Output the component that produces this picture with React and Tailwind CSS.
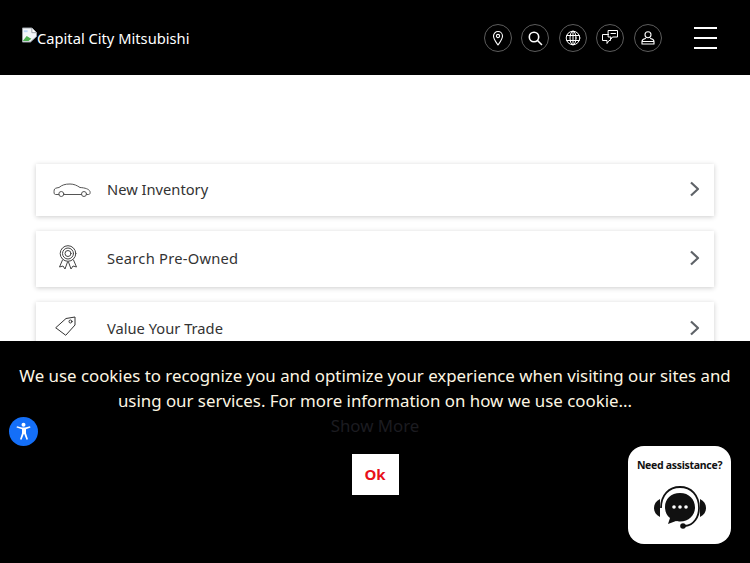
import React from "react";

const stroke = { fill: "none", stroke: "currentColor", strokeLinecap: "round", strokeLinejoin: "round" };

function HeadBtn({ children }) {
  return (
    <div className="w-[28px] h-[28px] rounded-full border border-[#5c5c5c] flex items-center justify-center text-white">
      {children}
    </div>
  );
}

function Row({ icon, label, cls, textCls, chevCls }) {
  return (
    <div className={`flex items-center bg-white shadow-[0_1px_5px_rgba(0,0,0,0.2)] pr-[14px] ${cls}`}>
      <div className="w-[71px] flex justify-center shrink-0">{icon}</div>
      <div className={`flex-1 text-[14.700px] text-[#333] ${textCls}`}>{label}</div>
      <svg width="11" height="16" viewBox="0 0 11 16" className={`text-[#5f6368] ${chevCls}`} {...stroke} strokeWidth="2.200">
        <path d="M2 1.500l7 6.500-7 6.500" strokeLinecap="butt" />
      </svg>
    </div>
  );
}

export default function App() {
  return (
    <div className="relative w-[750px] h-[563px] overflow-hidden bg-white font-['Noto_Sans',sans-serif]">
      <header className="h-[75px] bg-black flex items-center pl-[22px] pr-[33px]">
        <div className="flex items-center flex-1 text-white text-[14.700px] leading-none mt-[2px]">
          <svg width="15" height="16" viewBox="0 0 16 16" className="-mt-[6px] shrink-0">
            <path d="M.5.5h10l5 5v4L9 15.500H.5z" fill="#f3f6fa" stroke="#9aa0a6" />
            <path d="M10.500.5v5h5" fill="#fff" stroke="#9aa0a6" />
            <path d="M1 14l4-5 3 2 2 1-3 2.500H1z" fill="#4caf50" />
            <path d="M2 3h4v2H2z" fill="#bcd6f5" />
          </svg>
          <span>Capital City Mitsubishi</span>
        </div>
        <div className="flex items-center gap-[9.500px]">
          <HeadBtn>
            <svg width="14" height="16" viewBox="0 0 14 16" {...stroke} strokeWidth="1.100">
              <path d="M7 15C4.500 11.500 2.500 9 2.500 6a4.500 4.500 0 0 1 9 0c0 3-2 5.500-4.500 9z" />
              <circle cx="7" cy="6" r="1.600" />
            </svg>
          </HeadBtn>
          <HeadBtn>
            <svg width="16" height="16" viewBox="0 0 16 16" {...stroke} strokeWidth="1.600">
              <circle cx="7" cy="7" r="4.700" />
              <path d="M10.500 10.500L14.500 14.500" />
            </svg>
          </HeadBtn>
          <HeadBtn>
            <svg width="16" height="16" viewBox="0 0 16 16" {...stroke} strokeWidth="1">
              <circle cx="8" cy="8" r="6.800" />
              <ellipse cx="8" cy="8" rx="3" ry="6.800" />
              <path d="M8 1.200v13.600M1.800 5.500h12.400M1.800 10.500h12.400" />
            </svg>
          </HeadBtn>
          <HeadBtn>
            <svg width="18" height="17" viewBox="0 0 18 17" {...stroke} strokeWidth="1">
              <path d="M7.500 5.500H1.500v6h2M3.500 11.500h2.500v3l2-3H9.500V9" />
              <path d="M7.500 1.500h9v6.500H11.500l-1.500 2V8H7.500z" />
              <path d="M10 4.500h4.500" />
            </svg>
          </HeadBtn>
          <HeadBtn>
            <svg width="16" height="16" viewBox="0 0 16 16" {...stroke} strokeWidth="1.100">
              <circle cx="8" cy="4.800" r="3" />
              <path d="M5.500 8.500C3 9 2 10 2 11.500v2.500h12v-2.500c0-1.500-1-2.500-3.500-3M2.500 11.500h11" />
            </svg>
          </HeadBtn>
          <div className="ml-[22.800px] w-[23px] flex flex-col gap-[8px]">
            <div className="h-[2px] bg-white" />
            <div className="h-[2px] bg-white" />
            <div className="h-[2px] bg-white" />
          </div>
        </div>
      </header>

      <main className="pt-[89px] px-[36px] flex flex-col">
        <Row
          cls="h-[52px]"
          chevCls="-mt-[3px]"
          textCls="-mt-[2px]"
          label="New Inventory"
          icon={
            <svg width="38" height="15" viewBox="0 0 38 14" className="text-[#555]" {...stroke} strokeWidth="1">
              <path d="M6 11H2.500C1 11 .8 9 1.200 6.500 1.500 4.800 3 4.500 6 4c3-2.500 6-3.500 11-3.500 4 0 7 1.500 10 3.500 5 .3 9 1.500 10 4 .4 1.500 0 3-1.500 3H34M10.500 11h18" />
              <circle cx="8.300" cy="10.500" r="2.500" />
              <circle cx="31" cy="10.500" r="2.500" />
            </svg>
          }
        />
        <Row
          cls="h-[56px] mt-[15px]"
          chevCls="-mt-[2px]"
          textCls="-mt-[2px] tracking-[0.25px]"
          label="Search Pre-Owned"
          icon={
            <svg width="20" height="25" viewBox="0 0 20 25" className="text-[#444] -mt-[3px] -ml-[8px]" {...stroke} strokeWidth="1">
              <circle cx="10" cy="8.500" r="7.800" />
              <circle cx="10" cy="8.500" r="5.500" />
              <circle cx="10" cy="8.500" r="3" />
              <path d="M4.500 15L1.500 22l3.500-1 2 3 2.500-7M15.500 15l3 7-3.500-1-2 3-2.500-7" />
            </svg>
          }
        />
        <Row
          cls="h-[56px] mt-[15px]"
          chevCls="-mt-[5px]"
          textCls="-mt-[3px]"
          label="Value Your Trade"
          icon={
            <svg width="22" height="20" viewBox="0 0 22 20" className="text-[#333] -mt-[8px] -ml-[11px]" {...stroke} strokeWidth="1">
              <path d="M1 11.500L11 2.500l9-1.500v8L11 19z" />
              <circle cx="15.500" cy="5.500" r="1.500" />
            </svg>
          }
        />
      </main>

      <div className="absolute left-0 right-0 bottom-0 h-[222px] bg-black flex flex-col items-center text-center">
        <p className="mt-[22px] w-[730px] text-[16.850px] leading-[25px] text-[#fdf6e3]">
          We use cookies to recognize you and optimize your experience when visiting our sites and using our services. For more information on how we use cookie...
        </p>
        <div className="text-[16.850px] leading-[25px] text-[#1c1c20]">Show More</div>
        <button className="mt-[16px] w-[47px] h-[41px] bg-white text-[#e8101a] text-[15px] font-bold">Ok</button>
      </div>

      <div className="absolute left-[9px] top-[417px] w-[29px] h-[29px] rounded-full bg-[#146ff8] flex items-center justify-center">
        <svg width="21" height="21" viewBox="0 0 21 21" fill="white">
          <circle cx="10.500" cy="3.800" r="2" />
          <path d="M3.500 6.500l.5-1.300 5 1.300h3l5-1.300.5 1.300-4.500 1.700v4l2 6-1.500.6-2.300-5.800h-.4l-2.300 5.800-1.500-.6 2-6v-4z" />
        </svg>
      </div>

      <div className="absolute left-[628px] top-[446px] w-[103px] h-[98px] rounded-[16px] bg-white flex flex-col items-center">
        <div className="mt-[12px] text-[10.500px] leading-[14px] font-bold text-[#111] tracking-[-0.3px] whitespace-nowrap">Need assistance?</div>
        <svg width="54" height="46" viewBox="0 0 54 46" className="mt-[13px]">
          <path d="M8 23C8 10 16 2 27 2s19 8 19 21c0 9-5 17-14 18" fill="none" stroke="#111" strokeWidth="1.800" />
          <path d="M7 14C3 16 1 19 1 23s2 7 6 9z" fill="#111" />
          <path d="M47 14c4 2 6 5 6 9s-2 7-6 9z" fill="#111" />
          <circle cx="30" cy="41" r="2.800" fill="#111" />
          <path d="M27 8c-9 0-15 6-15 14 0 5 2 9 5 11l-2 6 8-3c1 .3 3 .4 4 .4 9 0 15-6 15-14S36 8 27 8z" fill="#111" />
          <circle cx="21" cy="22" r="1.800" fill="#fff" />
          <circle cx="27" cy="22" r="1.800" fill="#fff" />
          <circle cx="33" cy="22" r="1.800" fill="#fff" />
        </svg>
      </div>
    </div>
  );
}
